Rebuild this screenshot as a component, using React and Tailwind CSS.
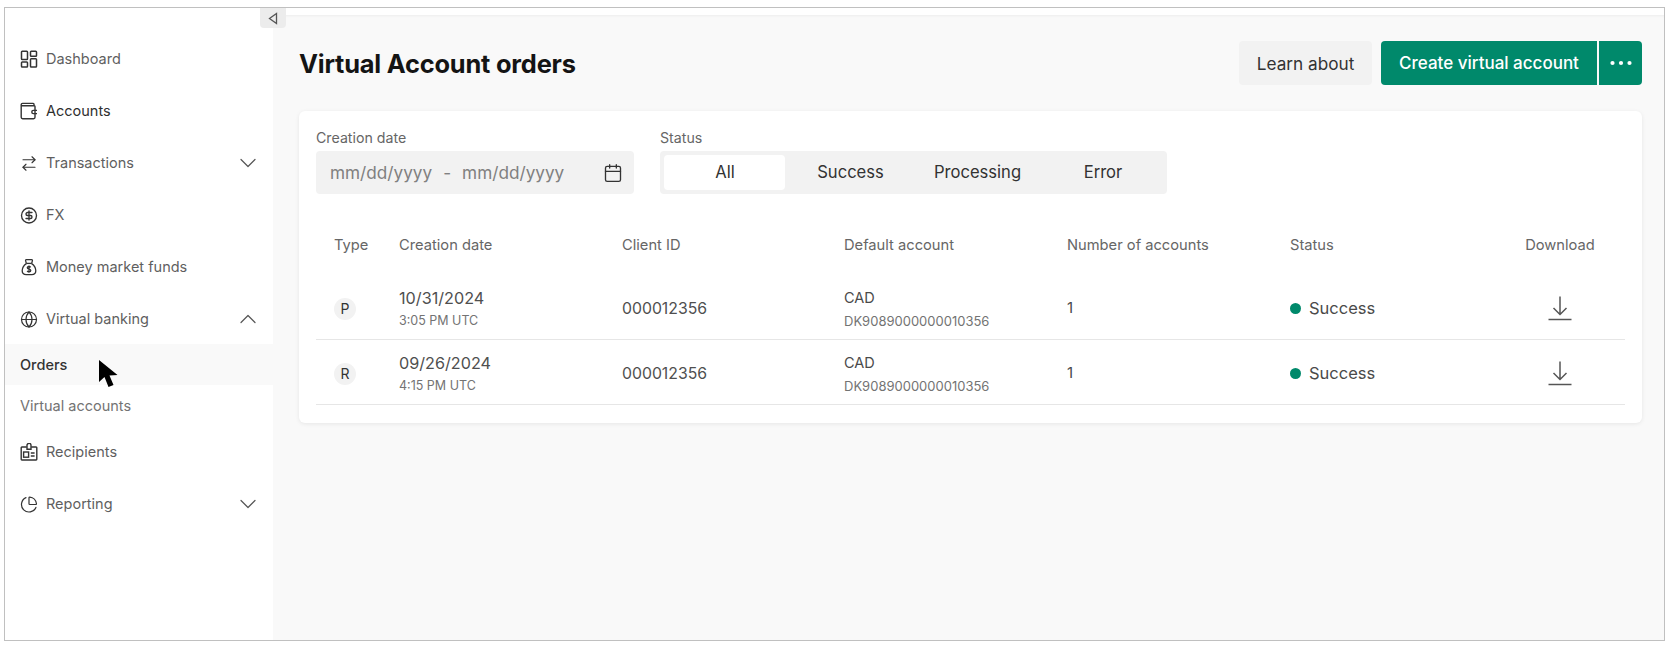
import { ChevronDown, ChevronUp, Calendar, Globe, CircleDollarSign, ArrowRightLeft, ChartPie } from 'lucide-react';

const DashboardIcon = () => (
  <svg width="18" height="18" viewBox="0 0 18 18" fill="none" stroke="currentColor" strokeWidth="1.5">
    <rect x="1.5" y="1.2" width="6" height="8.3" rx="0.8" />
    <rect x="10.5" y="1.2" width="6" height="5" rx="0.8" />
    <rect x="1.5" y="12" width="6" height="5" rx="0.8" />
    <rect x="10.5" y="8.8" width="6" height="8.2" rx="0.8" />
  </svg>
);

const WalletIcon = () => (
  <svg width="18" height="18" viewBox="0 0 18 18" fill="none" stroke="currentColor" strokeWidth="1.4">
    <path d="M14 4V2.2a.8.8 0 0 0-.8-.8H2.500A1.300 1.300 0 0 0 1.200 2.700v12.600c0 .8.600 1.400 1.400 1.400h11c.8 0 1.400-.6 1.400-1.400V4.600a.8.8 0 0 0-.8-.8H1.800" />
    <path d="M17 8.400h-3.600a1.600 1.600 0 0 0 0 3.200H17" />
  </svg>
);

const BagIcon = () => (
  <svg width="18" height="18" viewBox="0 0 18 18" fill="none" stroke="currentColor" strokeWidth="1.3">
    <path d="M6.300 5.400 5.600 2.600c-.1-.5.2-.9.7-.9h5.400c.5 0 .8.4.7.9l-.7 2.800" />
    <path d="M6.200 5.400h5.600" />
    <path d="M6.400 5.600C3.600 7.400 2.200 10.200 2.200 12.800c0 2.500 1.700 3.800 4 3.800h5.600c2.300 0 4-1.300 4-3.800 0-2.600-1.400-5.400-4.200-7.200" />
    <path d="M10.600 9.400C10.300 8.800 9.700 8.500 9 8.500c-1 0-1.700.5-1.700 1.300 0 1.900 3.500.9 3.500 2.800 0 .8-.8 1.300-1.800 1.300-.8 0-1.500-.4-1.800-1M9 7.600v7.200" />
  </svg>
);

const BadgeIcon = () => (
  <svg width="18" height="18" viewBox="0 0 18 18" fill="none" stroke="currentColor" strokeWidth="1.4">
    <path d="M6.800 4H1.900c-.4 0-.7.3-.7.7v11.600c0 .4.3.7.7.7h14.200c.4 0 .7-.3.7-.7V4.700c0-.4-.3-.7-.7-.7h-4.900" />
    <path d="M7 6.200V2.300a2 2 0 0 1 4 0v3.900z" />
    <rect x="3.600" y="9" width="5" height="5.200" />
    <path d="M10.800 10h3.800M10.800 13h3.800" />
  </svg>
);

const iconClass = 'w-[19px] h-[19px]';

function NavItem({ icon, label, chevron, dark }) {
  return (
    <div className="h-[52px] flex items-center pl-[15px] pr-[11px]">
      <span className="w-[18px] h-[18px] flex items-center justify-center text-[#333333] shrink-0">{icon}</span>
      <span className={`ml-[8px] text-[14.5px] ${dark ? 'text-[#2f2f2f]' : 'text-[#5f5f5f]'}`}>{label}</span>
      {chevron === 'down' && <ChevronDown className="ml-auto w-[28px] h-[28px] text-[#555555]" strokeWidth={1.05} />}
      {chevron === 'up' && <ChevronUp className="ml-auto w-[28px] h-[28px] text-[#555555]" strokeWidth={1.05} />}
    </div>
  );
}

const rows = [
  { type: 'P', date: '10/31/2024', time: '3:05 PM UTC' },
  { type: 'R', date: '09/26/2024', time: '4:15 PM UTC' },
];

const gridCols = 'grid grid-cols-[65px_223px_222px_223px_223px_220px_1fr]';

export default function App() {
  return (
    <div className="w-[1673px] h-[649px] bg-white pt-[7px] pl-[4px] overflow-hidden font-['Inter',sans-serif]">
      <div className="relative w-[1661px] h-[634px] border border-[#c0c0c0] flex bg-white">
        {/* sidebar */}
        <aside className="w-[268px] shrink-0 bg-white pt-[25px]">
          <NavItem icon={<DashboardIcon />} label="Dashboard" />
          <NavItem icon={<WalletIcon />} label="Accounts" dark />
          <NavItem icon={<ArrowRightLeft className={iconClass} strokeWidth={1.5} />} label="Transactions" chevron="down" />
          <NavItem icon={<CircleDollarSign className={iconClass} strokeWidth={1.8} />} label="FX" />
          <NavItem icon={<BagIcon />} label="Money market funds" />
          <NavItem icon={<Globe className={iconClass} strokeWidth={1.6} />} label="Virtual banking" chevron="up" />
          <div className="mt-[-1px] h-[41px] bg-[#f9f9f9] flex items-center pl-[15px] text-[14.5px] font-medium text-[#333333]">Orders</div>
          <div className="h-[41px] flex items-center pl-[15px] text-[14.5px] text-[#737373]">Virtual accounts</div>
          <NavItem icon={<BadgeIcon />} label="Recipients" />
          <NavItem icon={<ChartPie className={iconClass} strokeWidth={1.6} />} label="Reporting" chevron="down" />
        </aside>

        {/* main */}
        <main className="flex-1 pt-[7px] bg-white">
          <div className="h-full bg-[#f9f9f9] pl-[26px] pr-[22px] pt-[26px] shadow-[inset_0_3px_3px_-2px_rgba(0,0,0,0.05)]">
            <div className="flex items-center justify-between h-[44px]">
              <h1 className="pt-[3px] text-[25.4px] font-bold text-[#141414] tracking-[-0.2px]">Virtual Account orders</h1>
              <div className="flex items-center">
                <button className="w-[133px] h-[44px] pt-[1px] rounded bg-[#f2f2f2] text-[17.2px] text-[#333333]">Learn about</button>
                <button className="ml-[9px] w-[216px] h-[44px] pt-[1px] rounded-l bg-[#00896b] text-[17px] font-medium text-white">Create virtual account</button>
                <button className="ml-[2px] w-[43px] h-[44px] rounded-r bg-[#00896b] flex items-center justify-center text-white">
                  <svg width="24" height="6" viewBox="0 0 24 6" fill="currentColor">
                    <circle cx="3.500" cy="3" r="2.100" />
                    <circle cx="12" cy="3" r="2.100" />
                    <circle cx="20.500" cy="3" r="2.100" />
                  </svg>
                </button>
              </div>
            </div>

            <section className="mt-[26px] h-[312px] rounded-md bg-white px-[17px] pt-[17px] shadow-[0_1px_4px_rgba(0,0,0,0.08)]">
              <div className="flex gap-[26px]">
                <div>
                  <div className="text-[14.2px] leading-[20px] text-[#666666]">Creation date</div>
                  <div className="mt-[3px] w-[318px] h-[43px] rounded bg-[#f2f2f2] flex items-center pl-[14px] pr-[11px] text-[17.2px] text-[#808080]">
                    <span>mm/dd/yyyy</span>
                    <span className="mx-[11px]">-</span>
                    <span>mm/dd/yyyy</span>
                    <Calendar className="ml-auto w-[20px] h-[20px] text-[#333333]" strokeWidth={1.6} />
                  </div>
                </div>
                <div>
                  <div className="text-[14.2px] leading-[20px] text-[#666666]">Status</div>
                  <div className="mt-[3px] w-[507px] h-[43px] rounded bg-[#f2f2f2] flex items-center p-[4px] text-[16.6px] text-[#333333]">
                    <div className="w-[121px] h-[35px] pl-[1px] rounded bg-white flex items-center justify-center">All</div>
                    <div className="w-[131px] text-center">Success</div>
                    <div className="w-[123px] text-center">Processing</div>
                    <div className="ml-[4px] w-[120px] text-center">Error</div>
                  </div>
                </div>
              </div>

              <div className={`${gridCols} mt-[41px] pl-[18px] text-[14.7px] leading-[20px] text-[#666666]`}>
                <div>Type</div>
                <div>Creation date</div>
                <div>Client ID</div>
                <div>Default account</div>
                <div>Number of accounts</div>
                <div>Status</div>
                <div className="text-center pr-[15px]">Download</div>
              </div>

              <div className="mt-[20px]">
                {rows.map((row) => (
                  <div key={row.type} className={`${gridCols} items-center h-[65px] pt-[3px] pl-[18px] border-b border-[#e6e6e6]`}>
                    <div>
                      <span className="w-[22px] h-[22px] rounded-full bg-[#f2f2f2] flex items-center justify-center text-[14px] text-[#333333]">{row.type}</span>
                    </div>
                    <div className="pt-[2px]">
                      <div className="text-[16.200px] leading-[22px] text-[#4f4f4f]">{row.date}</div>
                      <div className="text-[12.500px] leading-[24px] text-[#737373]">{row.time}</div>
                    </div>
                    <div className="text-[15.800px] text-[#4f4f4f]">000012356</div>
                    <div className="pt-[2px]">
                      <div className="text-[14.500px] leading-[22px] text-[#4a4a4a]">CAD</div>
                      <div className="text-[13px] leading-[24px] text-[#737373]">DK9089000000010356</div>
                    </div>
                    <div className="text-[15px] text-[#4a4a4a]">1</div>
                    <div className="flex items-center text-[16.500px] text-[#4a4a4a]">
                      <span className="w-[11px] h-[11px] rounded-full bg-[#00896b]" />
                      <span className="ml-[8px]">Success</span>
                    </div>
                    <div className="flex justify-center pr-[15px] pb-[2px] text-[#555555]">
                      <svg width="26" height="26" viewBox="0 0 26 26" fill="none" stroke="currentColor" strokeWidth="1.500">
                        <path d="M13 1.500v18M6.500 13l6.500 6.500 6.500-6.500" />
                        <path d="M1.500 24.500h23" />
                      </svg>
                    </div>
                  </div>
                ))}
              </div>
            </section>
          </div>
        </main>

        {/* sidebar collapse */}
        <button className="absolute left-[255px] top-0 w-[26px] h-[20px] rounded-b bg-[#ececec] flex items-center justify-center">
          <svg width="12" height="13" viewBox="0 0 12 13" fill="none" stroke="#555555" strokeWidth="1.300">
            <path d="M9.500 1.500v10l-7-5z" />
          </svg>
        </button>

        {/* mouse pointer in the capture */}
        <svg className="absolute left-[93px] top-[351px]" width="22" height="30" viewBox="0 0 22 30" fill="#000000">
          <path d="M1 1v22l5.500-5 4 10 5-2-4-9.500 8-.5z" />
        </svg>
      </div>
    </div>
  );
}
